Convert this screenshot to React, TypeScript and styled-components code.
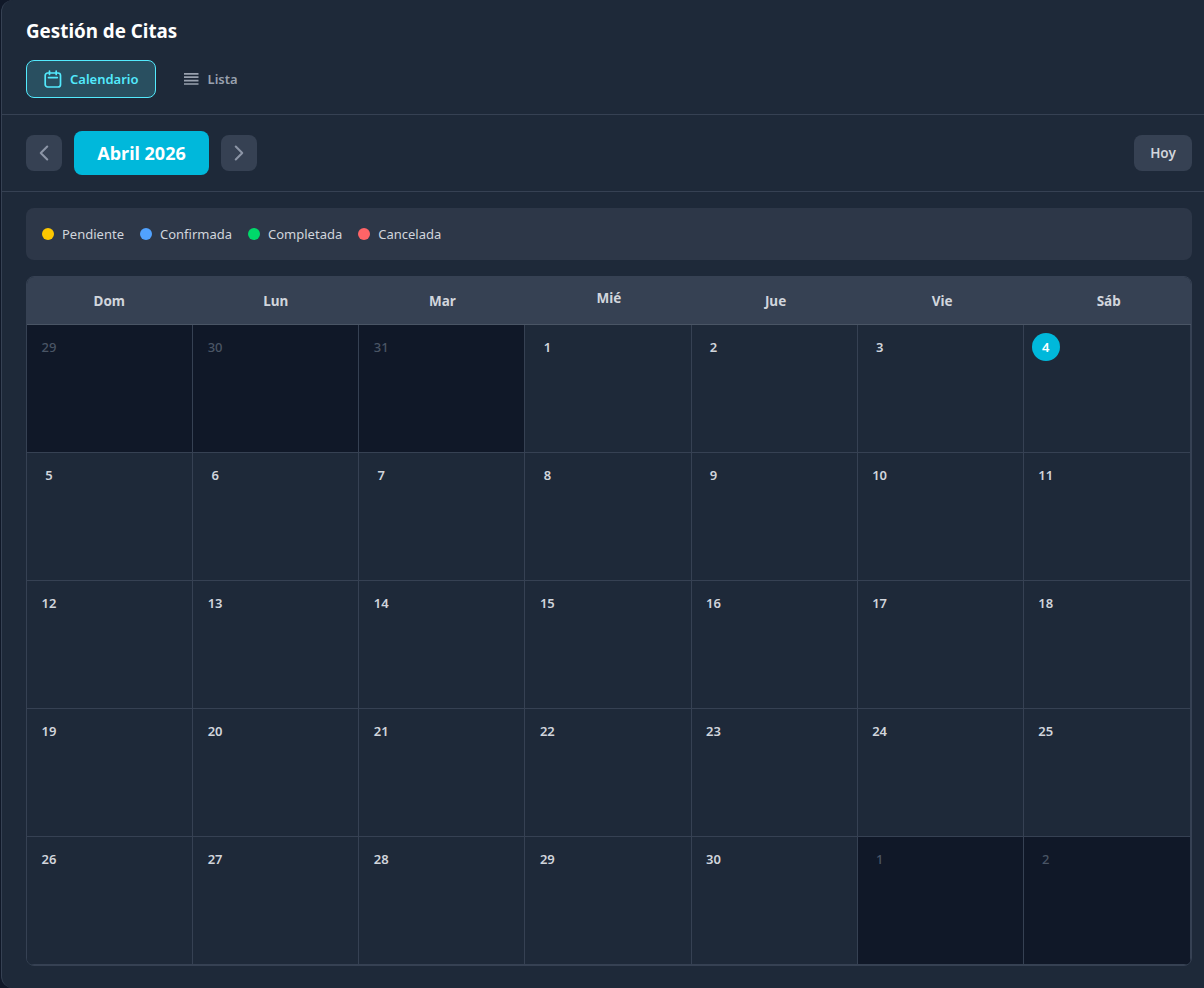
import { ChevronLeft, ChevronRight } from 'lucide-react'
import styled, { createGlobalStyle } from 'styled-components'

const GlobalStyle = createGlobalStyle`
  html, body {
    margin: 0;
    padding: 0;
    height: 100%;
    overflow: hidden;
    background: #101828;
  }
  * {
    box-sizing: border-box;
  }
  #root {
    font-family: 'Noto Sans', sans-serif;
    padding-left: 1px;
  }
`

const weekDays = ['Dom', 'Lun', 'Mar', 'Mié', 'Jue', 'Vie', 'Sáb']

const legend = [
  { label: 'Pendiente', color: '#fdc700' },
  { label: 'Confirmada', color: '#51a2ff' },
  { label: 'Completada', color: '#00d96a' },
  { label: 'Cancelada', color: '#ff6467' }
]

const days = [
  ...[29, 30, 31].map((day) => ({ day, outside: true })),
  ...Array.from({ length: 30 }, (_, i) => ({ day: i + 1, outside: false })),
  ...[1, 2].map((day) => ({ day, outside: true }))
]

const CalendarIcon = () => (
  <svg width="18" height="18" viewBox="0 0 18 18" fill="none" stroke="currentColor" strokeWidth="1.7" strokeLinecap="round">
    <rect x="1.2" y="3" width="15.3" height="14" rx="2.5" />
    <path d="M5.5 1v3.5M12.2 1v3.5M4.5 7.6h8.8" />
  </svg>
)

const ListIcon = () => (
  <svg width="18" height="18" viewBox="0 0 18 18" fill="none" stroke="currentColor" strokeWidth="1.7">
    <path d="M2 3.8h14.5M2 7.2h14.5M2 10.6h14.5M2 14h14.5" />
  </svg>
)

const App = () => (
  <Page>
    <GlobalStyle />
    <Header>
      <Title>Gestión de Citas</Title>
      <Tabs>
        <Tab $active>
          <CalendarIcon />
          Calendario
        </Tab>
        <Tab>
          <ListIcon />
          Lista
        </Tab>
      </Tabs>
    </Header>
    <NavBar>
      <NavGroup>
        <IconButton aria-label="Mes anterior">
          <ChevronLeft size={26} strokeWidth={1.9} />
        </IconButton>
        <MonthLabel>Abril 2026</MonthLabel>
        <IconButton aria-label="Mes siguiente">
          <ChevronRight size={26} strokeWidth={1.9} />
        </IconButton>
      </NavGroup>
      <TodayButton>Hoy</TodayButton>
    </NavBar>
    <Content>
      <Legend>
        {legend.map((item) => (
          <LegendItem key={item.label}>
            <Dot $color={item.color} />
            {item.label}
          </LegendItem>
        ))}
      </Legend>
      <CalendarBox>
        <WeekRow>
          {weekDays.map((day) => (
            <WeekDay key={day} $raised={day === 'Mié'}>
              {day}
            </WeekDay>
          ))}
        </WeekRow>
        <Grid>
          {days.map(({ day, outside }, i) => (
            <Cell key={i} $outside={outside}>
              <DayNumber $outside={outside} $today={!outside && day === 4}>
                {day}
              </DayNumber>
            </Cell>
          ))}
        </Grid>
      </CalendarBox>
    </Content>
  </Page>
)

export default App

const Page = styled.main`
  width: 1203px;
  height: 988px;
  background: #1e2939;
  border-left: 1px solid #364153;
  border-radius: 12px 0 0 12px;
  overflow: hidden;
`

const Header = styled.header`
  height: 115px;
  padding: 19px 24px 0;
  border-bottom: 1px solid #364153;
`

const Title = styled.h1`
  margin: 0;
  font-size: 18.8px;
  line-height: 24px;
  font-weight: 700;
  color: #ffffff;
`

const Tabs = styled.div`
  display: flex;
  gap: 8px;
  margin-top: 17px;
`

const Tab = styled.button<{ $active?: boolean }>`
  display: flex;
  align-items: center;
  gap: 8px;
  height: 38px;
  padding: 0 16px 0 17px;
  border: 1px solid ${({ $active }) => ($active ? '#53eafd' : 'transparent')};
  border-radius: 8px;
  background: ${({ $active }) => ($active ? 'rgba(83, 234, 253, 0.2)' : 'transparent')};
  color: ${({ $active }) => ($active ? '#53eafd' : '#99a1af')};
  font-family: inherit;
  font-size: 13px;
  font-weight: 600;
`

const NavBar = styled.div`
  display: flex;
  align-items: center;
  justify-content: space-between;
  height: 77px;
  padding: 0 12px 0 24px;
  border-bottom: 1px solid #364153;
`

const NavGroup = styled.div`
  display: flex;
  align-items: center;
  gap: 12px;
`

const IconButton = styled.button`
  display: flex;
  align-items: center;
  justify-content: center;
  width: 36px;
  height: 36px;
  padding: 0;
  border: none;
  border-radius: 8px;
  background: #364153;
  color: #8b94a5;
`

const MonthLabel = styled.div`
  display: flex;
  align-items: center;
  justify-content: center;
  width: 135px;
  height: 44px;
  border-radius: 8px;
  background: #00b8db;
  color: #ffffff;
  font-size: 18px;
  font-weight: 700;
`

const TodayButton = styled.button`
  height: 36px;
  width: 58px;
  padding: 0;
  border: none;
  border-radius: 8px;
  background: #364153;
  color: #d1d5dc;
  font-family: inherit;
  font-size: 13.5px;
  font-weight: 600;
`

const Content = styled.div`
  padding: 16px 12px 0 24px;
`

const Legend = styled.div`
  display: flex;
  align-items: center;
  gap: 16px;
  height: 52px;
  padding: 0 16px;
  border-radius: 8px;
  background: #2d3748;
`

const LegendItem = styled.div`
  display: flex;
  align-items: center;
  gap: 8px;
  color: #d1d5dc;
  font-size: 13px;
`

const Dot = styled.span<{ $color: string }>`
  width: 12px;
  height: 12px;
  border-radius: 50%;
  background: ${({ $color }) => $color};
`

const CalendarBox = styled.section`
  margin-top: 16px;
  border: 1px solid #364153;
  border-radius: 8px;
  overflow: hidden;
`

const WeekRow = styled.div`
  display: grid;
  grid-template-columns: repeat(7, 1fr);
  height: 48px;
  margin: 0 -2px 0 -1px;
  padding-right: 1px;
  background: #364153;
  border-bottom: 1px solid #4a5565;
`

const WeekDay = styled.div<{ $raised?: boolean }>`
  text-align: center;
  padding-top: ${({ $raised }) => ($raised ? '12px' : '15px')};
  line-height: 18px;
  font-size: 13.5px;
  font-weight: 700;
  color: #d1d5dc;
`

const Grid = styled.div`
  display: grid;
  grid-template-columns: repeat(6, 166.14px) 1fr;
  grid-auto-rows: 128px;
`

const Cell = styled.div<{ $outside: boolean }>`
  padding: 8px;
  border-right: 1px solid #364153;
  border-bottom: 1px solid #364153;
  background: ${({ $outside }) => ($outside ? '#101828' : '#1e2939')};
`

const DayNumber = styled.span<{ $outside: boolean; $today: boolean }>`
  display: flex;
  align-items: center;
  justify-content: center;
  width: 28px;
  height: 28px;
  border-radius: 50%;
  font-size: 13px;
  font-weight: ${({ $outside }) => ($outside ? 500 : 600)};
  color: ${({ $outside, $today }) => ($today ? '#ffffff' : $outside ? '#4a5565' : '#d1d5dc')};
  background: ${({ $today }) => ($today ? '#00b8db' : 'transparent')};
`
